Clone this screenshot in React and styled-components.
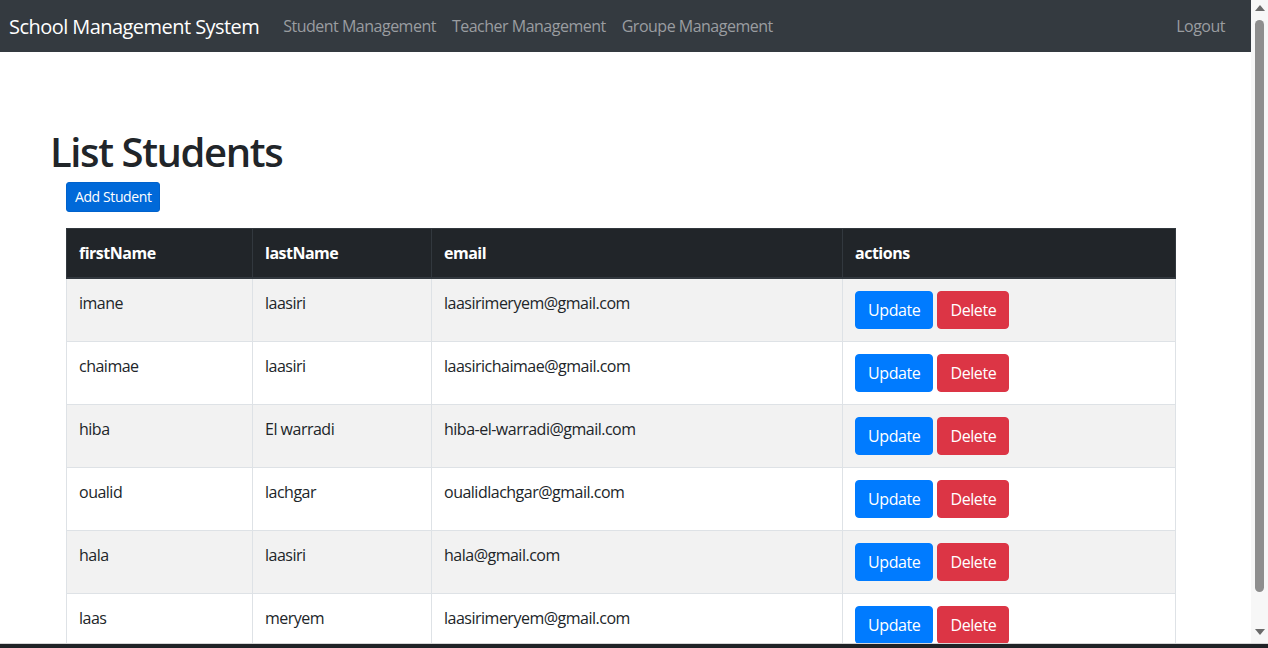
import React from 'react';
import styled, { createGlobalStyle } from 'styled-components';

const GlobalStyle = createGlobalStyle`
  html, body {
    margin: 0;
    padding: 0;
    background: #ffffff;
  }
  body {
    font-family: 'Open Sans', 'Noto Sans', sans-serif;
    color: #212529;
  }
  * {
    box-sizing: border-box;
  }
`;

const students = [
  { firstName: 'imane', lastName: 'laasiri', email: 'laasirimeryem@gmail.com' },
  { firstName: 'chaimae', lastName: 'laasiri', email: 'laasirichaimae@gmail.com' },
  { firstName: 'hiba', lastName: 'El warradi', email: 'hiba-el-warradi@gmail.com' },
  { firstName: 'oualid', lastName: 'lachgar', email: 'oualidlachgar@gmail.com' },
  { firstName: 'hala', lastName: 'laasiri', email: 'hala@gmail.com' },
  { firstName: 'laas', lastName: 'meryem', email: 'laasirimeryem@gmail.com' },
];

const Frame = styled.div`
  height: 648px;
  display: flex;
  flex-direction: column;
  overflow: hidden;
`;

const Screen = styled.div`
  display: flex;
  height: 644px;
  border-bottom: 1px solid #d6d6d6;
`;

const Viewport = styled.div`
  flex: 1;
  min-width: 0;
  overflow: hidden;
  background: #ffffff;
`;

const WindowEdge = styled.div`
  flex: 1;
  background: #1f2226;
`;

const Scrollbar = styled.div`
  width: 17px;
  background: #f7f7f7;
  display: flex;
  flex-direction: column;
  align-items: center;
  padding: 5px 0 8px;
`;

Scrollbar.Arrow = styled.div`
  width: 0;
  height: 0;
  border-left: 5px solid transparent;
  border-right: 5px solid transparent;
  ${({ $down }) =>
    $down
      ? 'border-top: 6px solid #6a6a6a;'
      : 'border-bottom: 6px solid #6a6a6a;'}
`;

Scrollbar.Thumb = styled.div`
  width: 9px;
  height: 572px;
  margin: 9px 0 0;
  border-radius: 5px;
  background: #8e8e8e;
`;

Scrollbar.Spacer = styled.div`
  flex: 1;
`;

const Navbar = styled.nav`
  height: 52px;
  background: #343a40;
  display: flex;
  align-items: center;
  padding: 0 18px 0 9px;
`;

Navbar.Brand = styled.a`
  font-size: 20px;
  color: #ffffff;
  margin-right: 16px;
  white-space: nowrap;
  letter-spacing: -0.55px;
`;

Navbar.Link = styled.a`
  font-size: 16px;
  padding: 0 8px;
  color: #9a9da0;
  white-space: nowrap;
  letter-spacing: -0.5px;
  margin-left: ${({ $push }) => ($push ? 'auto' : '0')};
`;

const Page = styled.main`
  padding: 76px 0 0 50px;
`;

const Title = styled.h1`
  margin: 0 0 6px;
  font-size: 40px;
  line-height: 48px;
  font-weight: 600;
  letter-spacing: -1.4px;
`;

const Section = styled.section`
  padding-left: 16px;
  width: 1126px;
`;

const AddButton = styled.button`
  display: inline-block;
  font-family: inherit;
  font-size: 14px;
  line-height: 20px;
  padding: 4px 8px;
  height: 30px;
  border: 1px solid #0062cc;
  border-radius: 3px;
  background: #0069d9;
  color: #ffffff;
  letter-spacing: -0.4px;
`;

const Table = styled.table`
  margin-top: 16px;
  width: 1109px;
  border-collapse: collapse;
  table-layout: fixed;
  font-size: 16px;
`;

const HeadCell = styled.th`
  text-align: left;
  font-weight: 700;
  line-height: 24px;
  padding: 12px;
  background: #212529;
  color: #ffffff;
  border: 1px solid #32383e;
  border-bottom-width: 2px;
  letter-spacing: -0.5px;
`;

const Row = styled.tr`
  background: ${({ $striped }) => ($striped ? '#f2f2f2' : '#ffffff')};
`;

const Cell = styled.td`
  vertical-align: top;
  line-height: 24px;
  padding: 12px;
  border: 1px solid #dee2e6;
  letter-spacing: -0.5px;
`;

const Actions = styled.div`
  display: flex;
  gap: 4px;
`;

const ActionButton = styled.button`
  font-family: inherit;
  font-size: 16px;
  line-height: 24px;
  padding: 6px 12px;
  border-radius: 4px;
  color: #ffffff;
  border: 1px solid ${({ $danger }) => ($danger ? '#dc3545' : '#007bff')};
  background: ${({ $danger }) => ($danger ? '#dc3545' : '#007bff')};
  letter-spacing: -0.4px;
`;

export default function App() {
  return (
    <>
      <GlobalStyle />
      <Frame>
        <Screen>
          <Viewport>
            <Navbar>
              <Navbar.Brand>School Management System</Navbar.Brand>
              <Navbar.Link>Student Management</Navbar.Link>
              <Navbar.Link>Teacher Management</Navbar.Link>
              <Navbar.Link>Groupe Management</Navbar.Link>
              <Navbar.Link $push>Logout</Navbar.Link>
            </Navbar>
            <Page>
              <Title>List Students</Title>
              <Section>
                <AddButton>Add Student</AddButton>
                <Table>
                  <colgroup>
                    <col style={{ width: 186 }} />
                    <col style={{ width: 179 }} />
                    <col style={{ width: 411 }} />
                    <col style={{ width: 333 }} />
                  </colgroup>
                  <thead>
                    <tr>
                      <HeadCell>firstName</HeadCell>
                      <HeadCell>lastName</HeadCell>
                      <HeadCell>email</HeadCell>
                      <HeadCell>actions</HeadCell>
                    </tr>
                  </thead>
                  <tbody>
                    {students.map((s, i) => (
                      <Row key={i} $striped={i % 2 === 0}>
                        <Cell>{s.firstName}</Cell>
                        <Cell>{s.lastName}</Cell>
                        <Cell>{s.email}</Cell>
                        <Cell>
                          <Actions>
                            <ActionButton>Update</ActionButton>
                            <ActionButton $danger>Delete</ActionButton>
                          </Actions>
                        </Cell>
                      </Row>
                    ))}
                  </tbody>
                </Table>
              </Section>
            </Page>
          </Viewport>
          <Scrollbar>
            <Scrollbar.Arrow />
            <Scrollbar.Thumb />
            <Scrollbar.Spacer />
            <Scrollbar.Arrow $down />
          </Scrollbar>
        </Screen>
        <WindowEdge />
      </Frame>
    </>
  );
}
